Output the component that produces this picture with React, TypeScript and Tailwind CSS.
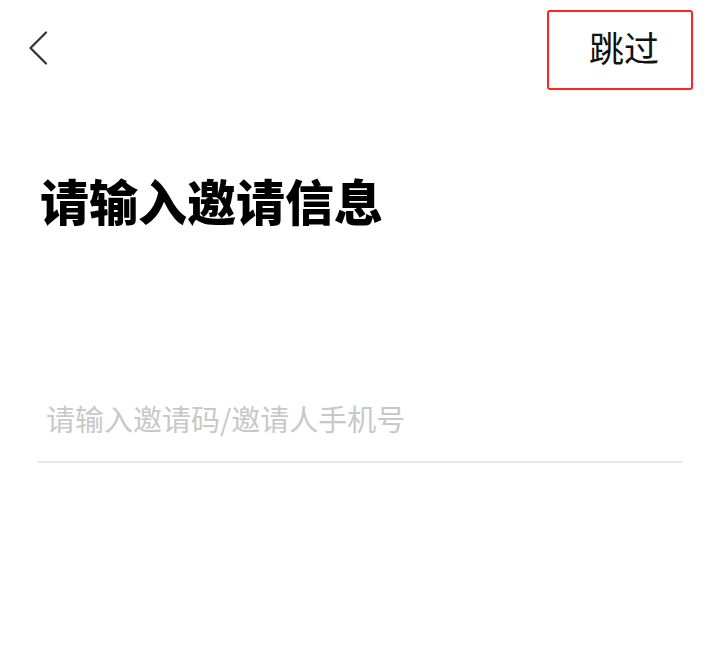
export default function App() {
  return (
    <div
      className="min-h-[650px] w-full bg-white"
      style={{ fontFamily: '"Noto Sans CJK SC", "Noto Sans", sans-serif' }}
    >
      <header className="flex items-start justify-between pl-[28px] pr-[27px] pt-[10px]">
        <button type="button" className="mt-[21px] flex h-[34px] w-[22px] items-center">
          <svg width="22" height="34" viewBox="0 0 22 34" fill="none">
            <path
              d="M18 1.5 L2.5 17 L18 32.5"
              stroke="#333333"
              strokeWidth="2.2"
              strokeLinecap="round"
              strokeLinejoin="round"
            />
          </svg>
        </button>
        <button
          type="button"
          className="flex h-[80px] w-[146px] items-center justify-center rounded-[3px] border-2 border-[#ff2424] pb-[7px] pl-[8px] text-[35px] leading-none text-[#111111]"
        >
          跳过
        </button>
      </header>

      <h1 className="ml-[40px] mt-[85px] text-[49px] font-black leading-none text-black">
        请输入邀请信息
      </h1>

      <div className="mx-[38px] mt-[164px] border-b-2 border-[#e6e6e6] pb-[13px]">
        <input
          type="text"
          placeholder="请输入邀请码/邀请人手机号"
          className="h-[60px] w-full bg-transparent pl-[8px] text-[29px] text-[#333333] outline-none placeholder:text-[#c8c8c8]"
        />
      </div>
    </div>
  );
}
